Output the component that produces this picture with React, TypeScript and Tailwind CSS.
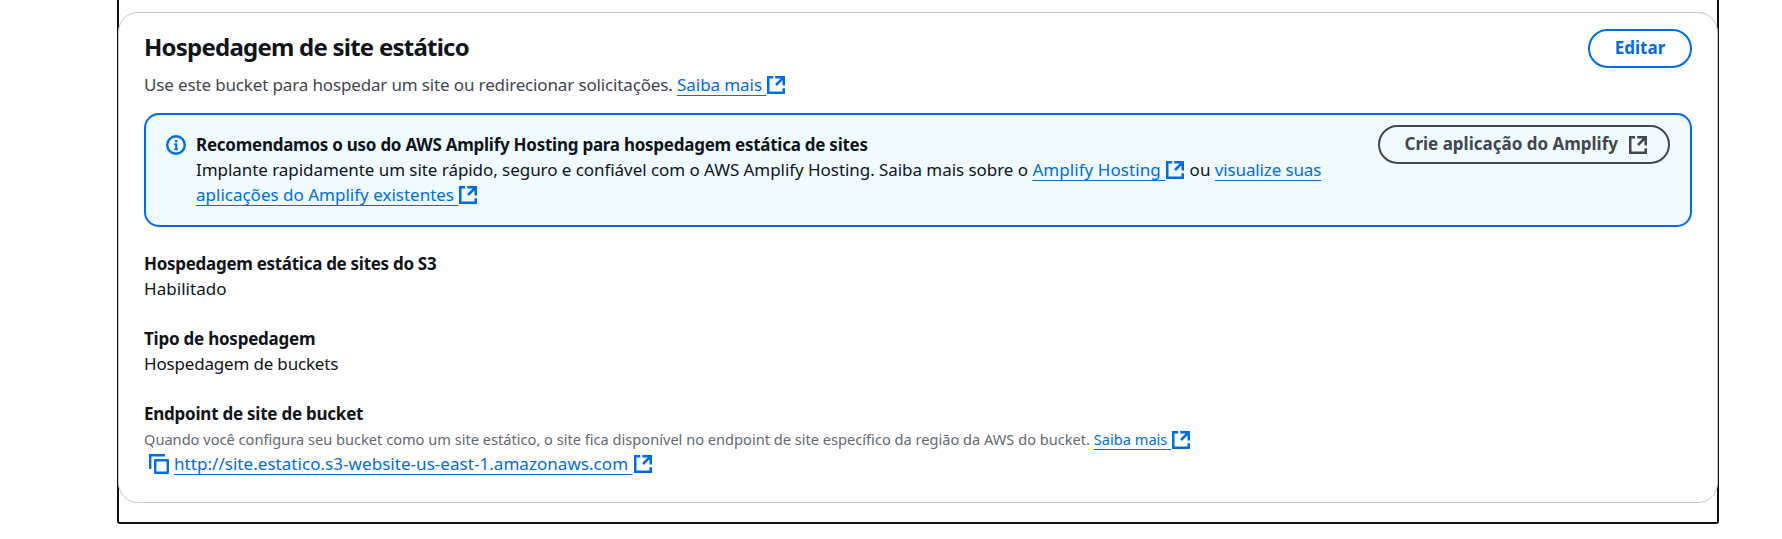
import type { ReactNode } from "react";

function ExternalIcon({ className = "" }: { className?: string }) {
  return (
    <svg viewBox="0 0 20 20" className={"inline-block h-5 w-5 shrink-0 " + className} fill="none" stroke="currentColor" strokeWidth="2.5">
      <path d="M7.2 2.25H2.25V17.75H17.75V13.2" />
      <path d="M9.2 2.25H17.75V10.4M17.6 2.4L10 10" />
    </svg>
  );
}

function InfoIcon() {
  return (
    <svg viewBox="0 0 20 20" className="h-5 w-5 shrink-0 text-[#006ce0]" fill="none" stroke="currentColor">
      <circle cx="10" cy="10" r="8.8" strokeWidth="2.4" />
      <path d="M10.2 5v2.2" strokeWidth="2.5" />
      <path d="M8.2 9.2h2V14.4M8.4 14.3h3.4" strokeWidth="2" />
    </svg>
  );
}

function CopyIcon() {
  return (
    <svg viewBox="0 0 20 20" className="h-5 w-5 shrink-0 text-[#006ce0]" fill="none" stroke="currentColor" strokeWidth="2.4" strokeLinejoin="round">
      <path d="M1.2 15V1.2H16" strokeLinejoin="miter" />
      <rect x="6.2" y="6.2" width="12.6" height="12.6" />
    </svg>
  );
}

function Link({ children, external = true, className = "", iconClass = "align-[-4px]" }: { children: ReactNode; external?: boolean; className?: string; iconClass?: string }) {
  return (
    <a className={"whitespace-nowrap text-[#006ce0] " + className}>
      <span className="underline decoration-1 underline-offset-4 [text-decoration-skip-ink:none]">
        {children}
        {external && "\u00a0"}
      </span>
      {external && <ExternalIcon className={iconClass} />}
    </a>
  );
}

export default function App() {
  return (
    <div className="h-[539px] overflow-hidden bg-white font-['Noto_Sans','Open_Sans',sans-serif] text-[17px] leading-[25px] text-[#0f141a]">
      <div className="ml-[117px] flex h-[524px] w-[1602px] flex-col rounded-b-[3px] border-2 border-t-0 border-[#0f1014]">
        <section className="-mx-px mt-3 h-[491px] rounded-[20px] border border-[#c6c6cd] bg-white px-[25px] pt-4">
          <div className="flex justify-between">
            <div className="pt-[3px]">
              <h2 className="text-[24px] leading-[30px] font-bold tracking-[-0.77px]">Hospedagem de site estático</h2>
              <p className="mt-[10px] whitespace-nowrap text-[#424650]">
                <span className="tracking-[-0.145px]">Use este bucket para hospedar um site ou redirecionar solicitações.</span>{" "}
                <Link className="tracking-[-0.08px]">Saiba mais</Link>
              </p>
            </div>
            <button className="flex h-[39px] w-[104px] items-center justify-center rounded-full border-2 border-[#006ce0] pb-0.5 font-bold text-[#006ce0]">
              Editar
            </button>
          </div>

          <div className="mt-4 flex h-[114px] items-start rounded-[15px] border-2 border-[#006ce0] bg-[#f0fbff] pt-[10px] pr-5 pl-5">
            <div className="pt-[10px]">
              <InfoIcon />
            </div>
            <div className="ml-[10px] flex-1 pt-[7px] whitespace-nowrap">
              <div className="font-bold tracking-[-0.255px]">Recomendamos o uso do AWS Amplify Hosting para hospedagem estática de sites</div>
              <div>
                <span className="tracking-[-0.055px]">
                  Implante rapidamente um site rápido, seguro e confiável com o AWS Amplify Hosting. Saiba mais sobre o
                </span>{" "}
                <Link className="tracking-[0.06px]">Amplify Hosting</Link> ou{" "}
                <Link external={false} className="tracking-[-0.14px]">visualize suas</Link>
              </div>
              <div>
                <Link>aplicações do Amplify existentes</Link>
              </div>
            </div>
            <button className="flex h-[39px] w-[292px] items-center justify-end gap-[10px] rounded-full border-2 border-[#424650] pr-5 font-bold whitespace-nowrap text-[#424650]">
              <span className="pb-0.5">Crie aplicação do Amplify</span>
              <ExternalIcon />
            </button>
          </div>

          <dl className="mt-6 whitespace-nowrap">
            <dt className="font-bold tracking-[-0.29px]">Hospedagem estática de sites do S3</dt>
            <dd className="tracking-[0.05px]">Habilitado</dd>
            <dt className="mt-[25px] font-bold tracking-[-0.23px]">Tipo de hospedagem</dt>
            <dd className="tracking-[-0.18px]">Hospedagem de buckets</dd>
            <dt className="mt-[25px] font-bold tracking-[-0.24px]">Endpoint de site de bucket</dt>
            <dd>
              <p className="mt-[3px] h-[22px] text-[14.6px] leading-[20px] text-[#656871]">
                <span className="tracking-[0.005px]">
                  Quando você configura seu bucket como um site estático, o site fica disponível no endpoint de site específico da região da AWS do bucket.
                </span>{" "}
                <Link iconClass="align-[-5px]">Saiba mais</Link>
              </p>
              <div className="flex items-center pl-[5px]">
                <CopyIcon />
                <Link className="ml-[5px] tracking-[0.045px]">http://site.estatico.s3-website-us-east-1.amazonaws.com</Link>
              </div>
            </dd>
          </dl>
        </section>
      </div>
    </div>
  );
}
